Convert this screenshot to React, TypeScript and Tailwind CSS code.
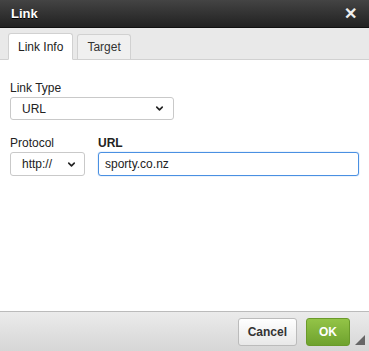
import { ChevronDown } from 'lucide-react';

export default function App() {
  return (
    <div className="w-[369px] h-[351px] flex flex-col bg-white font-[family-name:'Liberation_Sans',Arial,sans-serif] text-[12px] text-[#222] overflow-hidden">
      {/* title bar */}
      <div className="h-[28px] flex items-center justify-between px-[11px] bg-gradient-to-b from-[#444] to-[#222] border-b border-[#111]">
        <span className="text-white font-bold text-[13px] [text-shadow:0_1px_0_#000]">Link</span>
        <span className="text-[#eee] font-bold text-[16px] leading-none pr-[1px]">✕</span>
      </div>

      {/* tabs */}
      <div className="h-[32px] flex items-end gap-[4px] px-[8px] bg-[#e9e9e9] border-b border-[#d1d1d1]">
        <div className="h-[27px] -mb-px px-[9px] flex items-center bg-white border border-[#d1d1d1] border-b-white rounded-t-[3px]">
          Link Info
        </div>
        <div className="h-[25px] px-[9px] flex items-center bg-[#f0f0f0] border border-[#d1d1d1] border-b-0 rounded-t-[3px] text-[#333]">
          Target
        </div>
      </div>

      {/* body */}
      <div className="flex-1 px-[10px] pt-[21px] flex flex-col">
        <label className="leading-[15px] mb-[1px]">Link Type</label>
        <div className="w-[164px] h-[23px] flex items-center justify-between pl-[11px] pr-[8px] border border-[#c9c9c9] rounded-[3px]">
          <span>URL</span>
          <ChevronDown size={11} strokeWidth={3.5} />
        </div>

        <div className="flex gap-[13px] mt-[16px]">
          <div className="flex flex-col">
            <label className="leading-[15px] mb-[1px]">Protocol</label>
            <div className="w-[75px] h-[24px] flex items-center justify-between pl-[11px] pr-[7px] border border-[#c9c9c9] rounded-[3px]">
              <span>http://</span>
              <ChevronDown size={11} strokeWidth={3.5} />
            </div>
          </div>
          <div className="flex flex-col flex-1">
            <label className="leading-[15px] mb-[1px] font-bold">URL</label>
            <div className="w-[261px] h-[24px] flex items-center px-[6px] border border-[#4a90e2] rounded-[3px] shadow-[0_0_1px_#4a90e2]">
              <span>sporty.co.nz</span>
            </div>
          </div>
        </div>
      </div>

      {/* footer */}
      <div className="h-[40px] flex items-center justify-end gap-[9px] pr-[19px] bg-gradient-to-b from-[#ebebeb] to-[#d6d6d6] border-t border-[#bbb] relative">
        <div className="h-[28px] px-[9px] flex items-center font-bold text-[#333] bg-gradient-to-b from-[#fff] to-[#e8e8e8] border border-[#bbb] rounded-[3px]">
          Cancel
        </div>
        <div className="h-[28px] px-[12px] flex items-center font-bold text-white bg-gradient-to-b from-[#93c447] to-[#6fa22e] border border-[#6a9a2a] rounded-[3px]">
          OK
        </div>
        <div className="absolute right-[4px] bottom-[6px] w-0 h-0 border-l-[10px] border-l-transparent border-b-[10px] border-b-[#666]" />
      </div>
    </div>
  );
}
